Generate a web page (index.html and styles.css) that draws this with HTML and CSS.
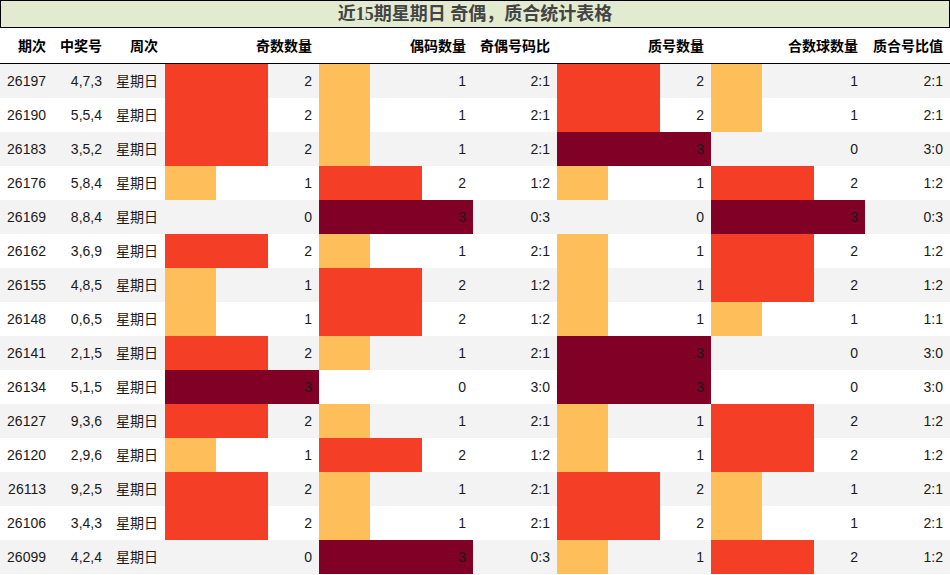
FILE: index.html
```html
<!DOCTYPE html>
<html lang="zh">
<head>
<meta charset="utf-8">
<title>近15期星期日 奇偶，质合统计表格</title>
<link rel="stylesheet" href="styles.css">
</head>
<body>
<div class="page">
  <div class="title">近15期星期日 奇偶，质合统计表格</div>
  <div class="grid head">
    <div class="c">期次</div><div class="c">中奖号</div><div class="c">周次</div><div class="c">奇数数量</div><div class="c">偶码数量</div><div class="c">奇偶号码比</div><div class="c">质号数量</div><div class="c">合数球数量</div><div class="c">质合号比值</div>
  </div>
  <div class="grid row odd"><div class="c">26197</div><div class="c">4,7,3</div><div class="c">星期日</div><div class="b"><span class="bar v2" style="width:66.67%"></span><span class="n">2</span></div><div class="b"><span class="bar v1" style="width:33.33%"></span><span class="n">1</span></div><div class="c">2:1</div><div class="b"><span class="bar v2" style="width:66.67%"></span><span class="n">2</span></div><div class="b"><span class="bar v1" style="width:33.33%"></span><span class="n">1</span></div><div class="c">2:1</div></div>
  <div class="grid row"><div class="c">26190</div><div class="c">5,5,4</div><div class="c">星期日</div><div class="b"><span class="bar v2" style="width:66.67%"></span><span class="n">2</span></div><div class="b"><span class="bar v1" style="width:33.33%"></span><span class="n">1</span></div><div class="c">2:1</div><div class="b"><span class="bar v2" style="width:66.67%"></span><span class="n">2</span></div><div class="b"><span class="bar v1" style="width:33.33%"></span><span class="n">1</span></div><div class="c">2:1</div></div>
  <div class="grid row odd"><div class="c">26183</div><div class="c">3,5,2</div><div class="c">星期日</div><div class="b"><span class="bar v2" style="width:66.67%"></span><span class="n">2</span></div><div class="b"><span class="bar v1" style="width:33.33%"></span><span class="n">1</span></div><div class="c">2:1</div><div class="b"><span class="bar v3" style="width:100%"></span><span class="n">3</span></div><div class="b"><span class="n">0</span></div><div class="c">3:0</div></div>
  <div class="grid row"><div class="c">26176</div><div class="c">5,8,4</div><div class="c">星期日</div><div class="b"><span class="bar v1" style="width:33.33%"></span><span class="n">1</span></div><div class="b"><span class="bar v2" style="width:66.67%"></span><span class="n">2</span></div><div class="c">1:2</div><div class="b"><span class="bar v1" style="width:33.33%"></span><span class="n">1</span></div><div class="b"><span class="bar v2" style="width:66.67%"></span><span class="n">2</span></div><div class="c">1:2</div></div>
  <div class="grid row odd"><div class="c">26169</div><div class="c">8,8,4</div><div class="c">星期日</div><div class="b"><span class="n">0</span></div><div class="b"><span class="bar v3" style="width:100%"></span><span class="n">3</span></div><div class="c">0:3</div><div class="b"><span class="n">0</span></div><div class="b"><span class="bar v3" style="width:100%"></span><span class="n">3</span></div><div class="c">0:3</div></div>
  <div class="grid row"><div class="c">26162</div><div class="c">3,6,9</div><div class="c">星期日</div><div class="b"><span class="bar v2" style="width:66.67%"></span><span class="n">2</span></div><div class="b"><span class="bar v1" style="width:33.33%"></span><span class="n">1</span></div><div class="c">2:1</div><div class="b"><span class="bar v1" style="width:33.33%"></span><span class="n">1</span></div><div class="b"><span class="bar v2" style="width:66.67%"></span><span class="n">2</span></div><div class="c">1:2</div></div>
  <div class="grid row odd"><div class="c">26155</div><div class="c">4,8,5</div><div class="c">星期日</div><div class="b"><span class="bar v1" style="width:33.33%"></span><span class="n">1</span></div><div class="b"><span class="bar v2" style="width:66.67%"></span><span class="n">2</span></div><div class="c">1:2</div><div class="b"><span class="bar v1" style="width:33.33%"></span><span class="n">1</span></div><div class="b"><span class="bar v2" style="width:66.67%"></span><span class="n">2</span></div><div class="c">1:2</div></div>
  <div class="grid row"><div class="c">26148</div><div class="c">0,6,5</div><div class="c">星期日</div><div class="b"><span class="bar v1" style="width:33.33%"></span><span class="n">1</span></div><div class="b"><span class="bar v2" style="width:66.67%"></span><span class="n">2</span></div><div class="c">1:2</div><div class="b"><span class="bar v1" style="width:33.33%"></span><span class="n">1</span></div><div class="b"><span class="bar v1" style="width:33.33%"></span><span class="n">1</span></div><div class="c">1:1</div></div>
  <div class="grid row odd"><div class="c">26141</div><div class="c">2,1,5</div><div class="c">星期日</div><div class="b"><span class="bar v2" style="width:66.67%"></span><span class="n">2</span></div><div class="b"><span class="bar v1" style="width:33.33%"></span><span class="n">1</span></div><div class="c">2:1</div><div class="b"><span class="bar v3" style="width:100%"></span><span class="n">3</span></div><div class="b"><span class="n">0</span></div><div class="c">3:0</div></div>
  <div class="grid row"><div class="c">26134</div><div class="c">5,1,5</div><div class="c">星期日</div><div class="b"><span class="bar v3" style="width:100%"></span><span class="n">3</span></div><div class="b"><span class="n">0</span></div><div class="c">3:0</div><div class="b"><span class="bar v3" style="width:100%"></span><span class="n">3</span></div><div class="b"><span class="n">0</span></div><div class="c">3:0</div></div>
  <div class="grid row odd"><div class="c">26127</div><div class="c">9,3,6</div><div class="c">星期日</div><div class="b"><span class="bar v2" style="width:66.67%"></span><span class="n">2</span></div><div class="b"><span class="bar v1" style="width:33.33%"></span><span class="n">1</span></div><div class="c">2:1</div><div class="b"><span class="bar v1" style="width:33.33%"></span><span class="n">1</span></div><div class="b"><span class="bar v2" style="width:66.67%"></span><span class="n">2</span></div><div class="c">1:2</div></div>
  <div class="grid row"><div class="c">26120</div><div class="c">2,9,6</div><div class="c">星期日</div><div class="b"><span class="bar v1" style="width:33.33%"></span><span class="n">1</span></div><div class="b"><span class="bar v2" style="width:66.67%"></span><span class="n">2</span></div><div class="c">1:2</div><div class="b"><span class="bar v1" style="width:33.33%"></span><span class="n">1</span></div><div class="b"><span class="bar v2" style="width:66.67%"></span><span class="n">2</span></div><div class="c">1:2</div></div>
  <div class="grid row odd"><div class="c">26113</div><div class="c">9,2,5</div><div class="c">星期日</div><div class="b"><span class="bar v2" style="width:66.67%"></span><span class="n">2</span></div><div class="b"><span class="bar v1" style="width:33.33%"></span><span class="n">1</span></div><div class="c">2:1</div><div class="b"><span class="bar v2" style="width:66.67%"></span><span class="n">2</span></div><div class="b"><span class="bar v1" style="width:33.33%"></span><span class="n">1</span></div><div class="c">2:1</div></div>
  <div class="grid row"><div class="c">26106</div><div class="c">3,4,3</div><div class="c">星期日</div><div class="b"><span class="bar v2" style="width:66.67%"></span><span class="n">2</span></div><div class="b"><span class="bar v1" style="width:33.33%"></span><span class="n">1</span></div><div class="c">2:1</div><div class="b"><span class="bar v2" style="width:66.67%"></span><span class="n">2</span></div><div class="b"><span class="bar v1" style="width:33.33%"></span><span class="n">1</span></div><div class="c">2:1</div></div>
  <div class="grid row odd"><div class="c">26099</div><div class="c">4,2,4</div><div class="c">星期日</div><div class="b"><span class="n">0</span></div><div class="b"><span class="bar v3" style="width:100%"></span><span class="n">3</span></div><div class="c">0:3</div><div class="b"><span class="bar v1" style="width:33.33%"></span><span class="n">1</span></div><div class="b"><span class="bar v2" style="width:66.67%"></span><span class="n">2</span></div><div class="c">1:2</div></div>
</div>
</body>
</html>
```
FILE: styles.css
```css
html, body {
  margin: 0;
  padding: 0;
  background: #ffffff;
}
body {
  font-family: "Liberation Sans", "Noto Sans CJK SC", sans-serif;
  font-size: 14px;
  color: #1a1a1a;
}
.page {
  width: 950px;
}
.title {
  box-sizing: border-box;
  height: 28px;
  border: 1px solid #000;
  background: #e2ebd0;
  color: #444444;
  font-family: "Liberation Serif", "Noto Sans CJK SC", serif;
  font-weight: bold;
  font-size: 18px;
  line-height: 26px;
  text-align: center;
}
.grid {
  display: grid;
  grid-template-columns: 53px 56px 56px 154px 154px 84px 154px 154px 85px;
}
.head {
  box-sizing: border-box;
  height: 36px;
  border-bottom: 1px solid #000;
  font-weight: bold;
  color: #000;
  font-family: "Liberation Sans", "Noto Sans CJK SC", sans-serif;
}
.head .c {
  line-height: 36px;
  padding-top: 0;
}
.c {
  text-align: right;
  padding-right: 7px;
  white-space: nowrap;
  align-self: center;
}
.row {
  height: 34px;
  background: #ffffff;
}
.row.odd {
  background: #f3f3f3;
}
.row .c {
  line-height: 34px;
}
.b {
  display: grid;
  height: 34px;
}
.bar {
  grid-area: 1 / 1;
  height: 34px;
  justify-self: start;
}
.n {
  grid-area: 1 / 1;
  justify-self: end;
  padding-right: 7px;
  line-height: 34px;
}
.v1 { background: #febe5a; }
.v2 { background: #f43e26; }
.v3 { background: #800026; }
```
